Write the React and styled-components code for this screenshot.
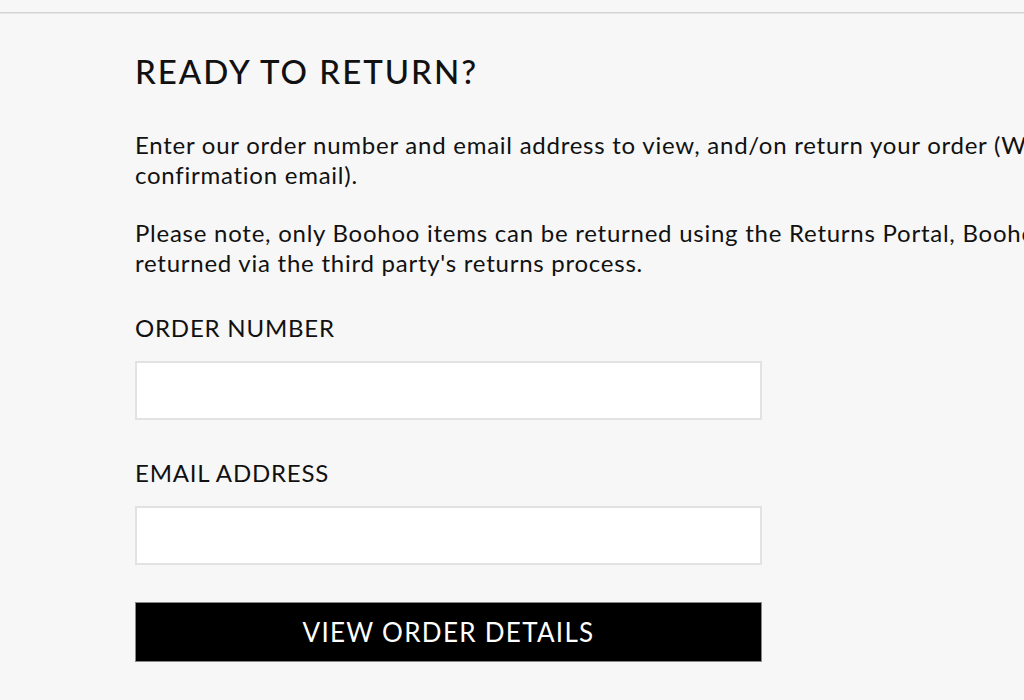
import React from 'react'
import styled, { createGlobalStyle } from 'styled-components'

const GlobalStyle = createGlobalStyle`
  html, body {
    margin: 0;
    padding: 0;
    background: #f7f7f7;
    overflow: hidden;
  }
  body {
    font-family: Lato, "Open Sans", Arial, sans-serif;
    color: #111;
  }
`

function App() {
  return (
    <>
      <GlobalStyle />
      <Page>
        <TopBar />
        <Content>
          <Title>READY TO RETURN?</Title>
          <Text>
            Enter our order number and email address to view, and/on return your order (We sent it in your order
            confirmation email).
          </Text>
          <Text>
            Please note, only Boohoo items can be returned using the Returns Portal, Boohoo partner items must be
            returned via the third party's returns process.
          </Text>
          <Form>
            <Field>
              <Label>ORDER NUMBER</Label>
              <Input type="text" />
            </Field>
            <Field>
              <Label>EMAIL ADDRESS</Label>
              <Input type="email" />
            </Field>
            <Submit type="button">VIEW ORDER DETAILS</Submit>
          </Form>
        </Content>
      </Page>
    </>
  )
}

export default App

const Page = styled.div`
  width: 1024px;
  height: 700px;
  overflow: hidden;
  padding-top: 12px;
  box-sizing: border-box;
`

const TopBar = styled.div`
  height: 0;
  border-top: 1px solid #d4d4d4;
  border-bottom: 1px solid #e6e6e6;
`

const Content = styled.div`
  width: 1355px;
  box-sizing: border-box;
  padding: 37px 0 0 135px;
`

const Title = styled.h1`
  margin: 0 0 39px;
  font-size: 33px;
  font-weight: 500;
  letter-spacing: 2px;
  line-height: 40px;
`

const Text = styled.p`
  margin: 0 0 28px;
  font-size: 24px;
  line-height: 30px;
  letter-spacing: 0.75px;
`

const Form = styled.div`
  width: 627px;
  margin-top: 35px;
  display: flex;
  flex-direction: column;
  gap: 38px;
`

const Field = styled.div`
  display: flex;
  flex-direction: column;
`

const Label = styled.label`
  font-size: 24px;
  line-height: 30px;
  letter-spacing: 0.8px;
  margin-bottom: 18px;
`

const Input = styled.input`
  height: 59px;
  box-sizing: border-box;
  border: 2px solid #e2e2e2;
  background: #fff;
  outline: none;
  padding: 0 16px;
  font: inherit;
`

const Submit = styled.button`
  height: 60px;
  margin-top: -1px;
  background: #000;
  color: #fff;
  border: 1px solid #888;
  font-family: Lato, "Open Sans", Arial, sans-serif;
  font-size: 26px;
  letter-spacing: 1.3px;
  cursor: pointer;
`
